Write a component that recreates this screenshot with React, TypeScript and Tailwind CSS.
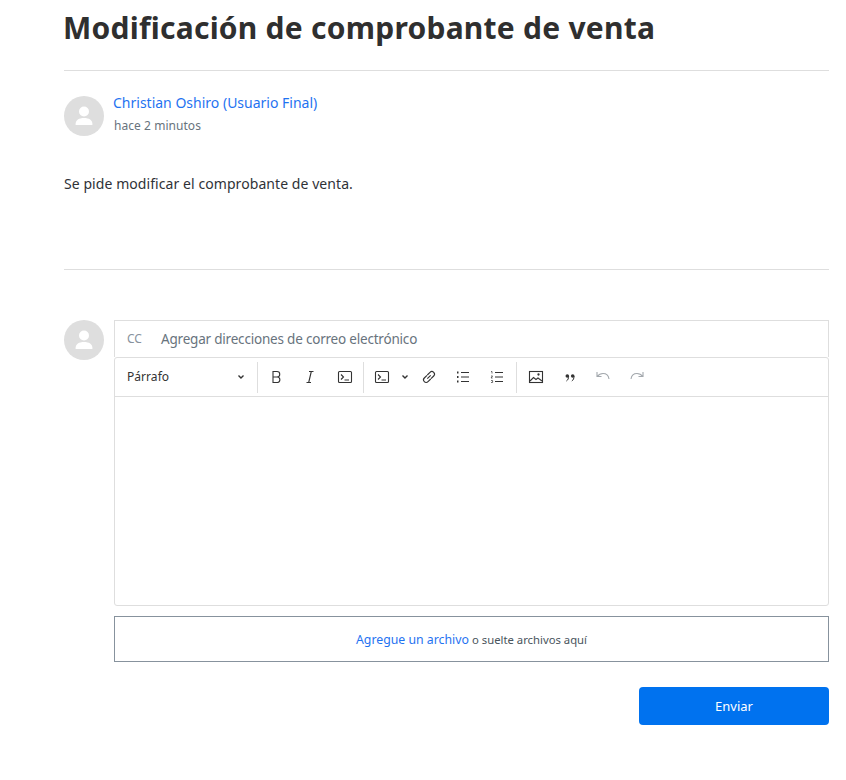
import React from "react";

const Avatar = () => (
  <div className="w-10 h-10 rounded-full bg-[#dedede] flex items-center justify-center shrink-0">
    <svg width="20" height="22" viewBox="0 0 20 22">
      <circle cx="10" cy="6.5" r="5" fill="#fff" />
      <path d="M1.5 19.5c0-4.5 3.5-6.5 8.500-6.500s8.500 2 8.500 6.500c0 .3-.2.5-.5.5H2c-.3 0-.5-.2-.5-.5z" fill="#fff" />
    </svg>
  </div>
);

const Icon = ({ children, w = 34, color = "#333" }: { children: React.ReactNode; w?: number; color?: string }) => (
  <div className="h-[38px] flex items-center justify-center" style={{ width: w, color }}>
    <svg width="16" height="16" viewBox="0 0 16 16" fill="none" stroke="currentColor" strokeWidth="1.1">
      {children}
    </svg>
  </div>
);

const Chevron = () => (
  <svg width="8" height="6" viewBox="0 0 8 6" fill="none" stroke="#333" strokeWidth="1.4">
    <path d="M1.500 1.500l2.500 2.500 2.500-2.500" />
  </svg>
);

const Sep = () => <div className="w-px h-[31px] bg-[#dedede]" />;

const TerminalPaths = () => (
  <>
    <rect x="1.500" y="2.500" width="13" height="11" rx="1" />
    <path d="M4 5.500l2.500 2.500L4 10.500M7.500 11h4.500" />
  </>
);

export default function App() {
  return (
    <div className="min-h-[780px] bg-white pl-16 pr-[17px] text-[14px] text-[#2f3237] font-['Noto_Sans','Open_Sans',sans-serif]">
      <h1 className="m-0 h-[71px] border-b border-[#dedede] pt-[5px] text-[30px] leading-[46px] font-bold text-[#2f2f2f] tracking-[0.24px] -indent-px">
        Modificación de comprobante de venta
      </h1>

      <div className="flex gap-2.5 pt-[25px]">
        <Avatar />
        <div className="flex flex-col">
          <span className="text-[14px] leading-[20px] text-[#1f73f1] -mt-[3px] -ml-px">Christian Oshiro (Usuario Final)</span>
          <span className="text-[12px] leading-[16px] mt-[5px] text-[#68737d] tracking-[0.05px]">hace 2 minutos</span>
        </div>
      </div>

      <p className="m-0 mt-[38px] h-[96px] border-b border-[#dedede] leading-[20px] text-[14px] tracking-[0.07px]">
        Se pide modificar el comprobante de venta.
      </p>

      <div className="flex gap-2.5 mt-[50px]">
        <Avatar />
        <div className="flex-1 min-w-0">
          <div className="h-[37px] border border-[#dedede] border-b-0 flex items-center pl-3 text-[14px]">
            <span className="w-[34px] text-[12px] text-[#87929d]">CC</span>
            <span className="text-[#68737d] text-[13.5px] tracking-[-0.2px]">Agregar direcciones de correo electrónico</span>
          </div>
          <div className="h-[249px] border border-[#dedede] rounded-[3px] flex flex-col">
            <div className="h-[39px] border-b border-[#dedede] flex items-center shrink-0">
              <div className="w-[142px] pl-3 pr-3 flex items-center justify-between text-[12px] text-[#333] tracking-[0.05px]">
                <span>Párrafo</span>
                <Chevron />
              </div>
              <Sep />
              <Icon w={35}>
                <path d="M5 2.500h4a2.600 2.600 0 0 1 0 5.500H5zM5 8h4.600a2.800 2.800 0 0 1 0 5.500H5z" />
              </Icon>
              <Icon w={33}>
                <path d="M7 2.500h4.500M4.500 13.500H9M9.300 2.500L6.700 13.500" />
              </Icon>
              <Icon w={37}>
                <TerminalPaths />
              </Icon>
              <Sep />
              <Icon w={36}>
                <TerminalPaths />
              </Icon>
              <div className="w-2 ml-px mr-[3px] flex items-center"><Chevron /></div>
              <Icon w={34}>
                <path d="M6.300 9.700l3.400-3.400M6 6.300L3.300 9a2.600 2.600 0 0 0 3.700 3.700l2.700-2.700M10 9.700L12.700 7A2.600 2.600 0 0 0 9 3.300L6.300 6" />
              </Icon>
              <Icon w={34}>
                <path d="M6 3.500h8M6 8h8M6 12.500h8" />
                <path d="M2 3.500h1.500M2 8h1.500M2 12.500h1.500" strokeWidth="2" />
              </Icon>
              <Icon w={34}>
                <path d="M6 3.500h8M6 8h8M6 12.500h8" />
                <path d="M2 2.500h1v2M2 7h1.600L2 9h1.600M2 11.500h1.600v2H2" strokeWidth="0.7" />
              </Icon>
              <div className="w-0.5" />
              <Sep />
              <Icon w={38}>
                <rect x="1.500" y="2.500" width="13" height="11" />
                <path d="M2 12l3.500-3.500 2.500 2 2-1.500 4 3" />
                <circle cx="10.500" cy="5.500" r="0.6" fill="currentColor" />
              </Icon>
              <Icon w={30}>
                <circle cx="5.300" cy="7" r="1.800" fill="currentColor" stroke="none" />
                <circle cx="10.700" cy="7" r="1.800" fill="currentColor" stroke="none" />
                <path d="M6.600 7c0 2.500-.6 4-2.200 5M12 7c0 2.500-.6 4-2.200 5" strokeWidth="1" />
              </Icon>
              <Icon w={36} color="#a3a8ad">
                <path d="M2 3v4.500h4.500M2.300 7.500C3.800 5.500 5.800 4.500 8 4.500c3.200 0 5.500 2.200 6 5.500" />
              </Icon>
              <Icon w={32} color="#a3a8ad">
                <path d="M14 3v4.500H9.500M13.700 7.500C12.200 5.500 10.200 4.500 8 4.500c-3.200 0-5.500 2.200-6 5.500" />
              </Icon>
            </div>
          </div>
          <div className="mt-[10px] h-[46px] border border-[#87929d] flex items-center justify-center pt-[2px]">
            <span className="text-[#1f73f1] text-[12.3px]">Agregue un archivo</span>
            <span className="ml-[3px] text-[11.3px] text-[#49545c]">o suelte archivos aquí</span>
          </div>
          <div className="mt-[25px] flex justify-end">
            <button className="w-[190px] h-[38px] rounded-[4px] bg-[#0072ef] text-white text-[13px] flex items-center justify-center pt-px">
              Enviar
            </button>
          </div>
        </div>
      </div>
    </div>
  );
}
